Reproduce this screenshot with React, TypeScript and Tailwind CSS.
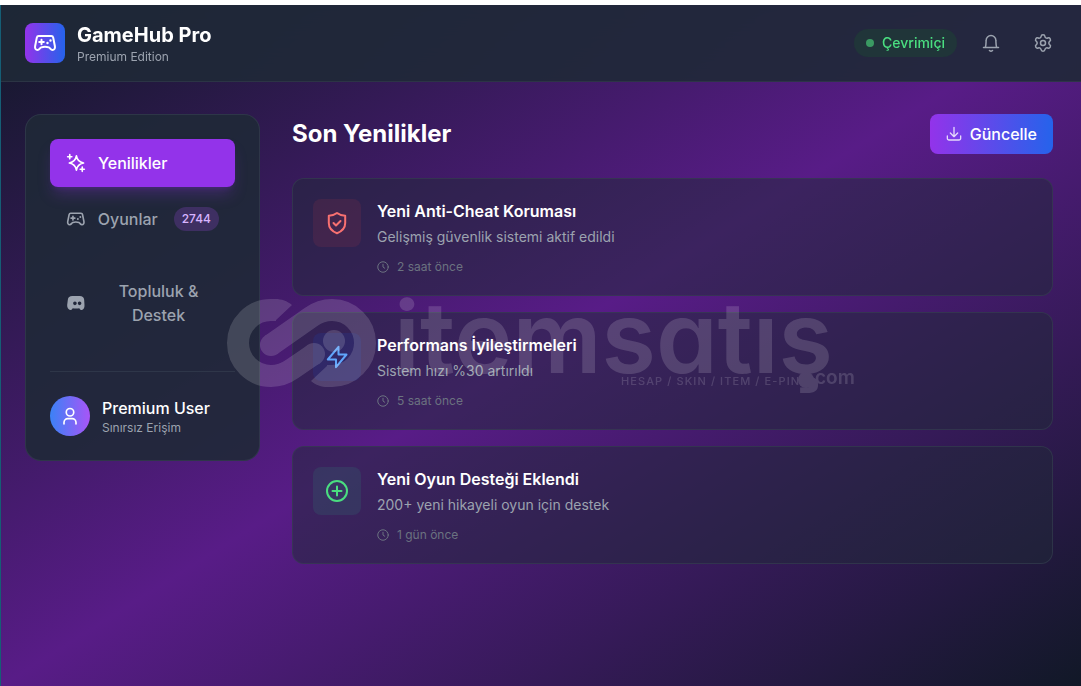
import type { ReactNode } from "react";
import { Settings } from "lucide-react";

type IconProps = { className?: string };

function Stroke({ className, children }: IconProps & { children: ReactNode }) {
  return (
    <svg
      viewBox="0 0 24 24"
      fill="none"
      stroke="currentColor"
      strokeWidth="2"
      strokeLinecap="round"
      strokeLinejoin="round"
      className={className}
      aria-hidden="true"
    >
      {children}
    </svg>
  );
}

const GamepadIcon = ({ className }: IconProps) => (
  <Stroke className={className}>
    <path d="M5.8 5h12.4a2 2 0 0 1 2 1.600l1.700 8.600c.4 2.300-.8 3.800-2.400 3.800-1.900 0-2.200-1.900-3.800-2.600-1.900-.7-5.500-.7-7.400 0C6.700 17.100 6.400 19 4.500 19 2.900 19 1.700 17.500 2.100 15.200L3.800 6.600A2 2 0 0 1 5.800 5Z" />
    <path d="M8.500 8.700v4.600M6.200 11h4.600" />
    <path d="M17.500 9.500h.01M14.500 12h.01" strokeWidth="2.400" />
  </Stroke>
);

const SparklesIcon = ({ className }: IconProps) => (
  <Stroke className={className}>
    <path d="M12.500 3.500c.8 5 3 7.400 8.500 8.500-5.500 1.100-7.700 3.500-8.500 8.500-.8-5-3-7.400-8.500-8.500 5.500-1.100 7.700-3.500 8.500-8.500Z" />
    <path d="M4.500 2v5M2 4.500h5M19.500 17v5M17 19.500h5" />
  </Stroke>
);

const DiscordIcon = ({ className }: IconProps) => (
  <svg viewBox="0 0 24 24" fill="currentColor" fillRule="evenodd" className={className} aria-hidden="true">
    <path d="M7.500 3.500h9c3.200 0 4.900 1.300 5.300 4.500l.4 6.500c.2 3.300-.9 5-3 5.800-1.200.4-2.100-.1-2.700-1.200l-.5-.9c-2.600.6-5.400.6-8 0l-.5.9c-.6 1.100-1.500 1.600-2.700 1.200-2.100-.8-3.600-2.500-3.400-5.800L2.200 8C2.600 4.800 4.300 3.500 7.500 3.500Z M10.700 10.200a2.200 2.200 0 1 0 0 4.400 2.200 2.200 0 0 0 0-4.400Z M16.300 10.200a2.200 2.200 0 1 0 0 4.400 2.200 2.200 0 0 0 0-4.400Z" />
  </svg>
);

const BellIcon = ({ className }: IconProps) => (
  <Stroke className={className}>
    <path d="M2 18h20M4.500 18C5.500 14.500 5.300 12 5.500 8.500a6.500 6.500 0 0 1 13 0c.2 3.500 0 6 1 9.500M10 22c1 .9 3 .9 4 0" />
  </Stroke>
);

const DownloadIcon = ({ className }: IconProps) => (
  <Stroke className={className}>
    <path d="M12 2v13M6.500 10.500 12 16l5.500-5.500M2 15v3.500A2.500 2.500 0 0 0 4.500 21h15a2.500 2.500 0 0 0 2.500-2.500V15" />
  </Stroke>
);

const ShieldIcon = ({ className }: IconProps) => (
  <Stroke className={className}>
    <path d="M12 2c2.300 1.800 5 2.600 8.200 2.800V12c0 5-3 8.200-8.200 10.200C6.800 20.200 3.800 17 3.800 12V4.800C7 4.600 9.700 3.800 12 2Z" />
    <path d="m8.500 12 2.500 2.500 4.500-4.500" />
  </Stroke>
);

const BoltIcon = ({ className }: IconProps) => (
  <Stroke className={className}>
    <path d="M13.500 1.800V9.500H21.500L11 22.200V14.500H2.800Z" />
  </Stroke>
);

const PlusCircleIcon = ({ className }: IconProps) => (
  <Stroke className={className}>
    <circle cx="12" cy="12" r="10" />
    <path d="M12 7.500v9M7.500 12h9" />
  </Stroke>
);

const ClockIcon = ({ className }: IconProps) => (
  <Stroke className={className}>
    <circle cx="12" cy="12" r="10.500" />
    <path d="M12 6.500V12l3.500 2.500" />
  </Stroke>
);

const UserIcon = ({ className }: IconProps) => (
  <Stroke className={className}>
    <circle cx="12" cy="7" r="5" strokeWidth="2.200" />
    <path d="M4 22.500v-2a5 5 0 0 1 5-5h6a5 5 0 0 1 5 5v2" strokeWidth="2.200" />
  </Stroke>
);

const news = [
  {
    title: "Yeni Anti-Cheat Koruması",
    text: "Gelişmiş güvenlik sistemi aktif edildi",
    time: "2 saat önce",
    icon: ShieldIcon,
    tile: "bg-[#ef4444]/10 text-[#f87171]",
  },
  {
    title: "Performans İyileştirmeleri",
    text: "Sistem hızı %30 artırıldı",
    time: "5 saat önce",
    icon: BoltIcon,
    tile: "bg-[#1e40af]/20 text-[#60a5fa]",
  },
  {
    title: "Yeni Oyun Desteği Eklendi",
    text: "200+ yeni hikayeli oyun için destek",
    time: "1 gün önce",
    icon: PlusCircleIcon,
    tile: "bg-[#35506a]/40 text-[#4ade80]",
  },
];

function Watermark() {
  return (
    <div className="pointer-events-none absolute inset-0 flex items-center justify-center pl-0.5">
      <svg viewBox="228 299 627 89" className="w-[627px] overflow-visible fill-white opacity-15" aria-hidden="true">
        <g fill="none" stroke="white" strokeWidth="22">
          <path d="M271 345 311 317C318 312 324 310 332 310A33 33 0 0 1 332 376H327" />
          <path d="M314 354 292 369C285 374 279 376 271 376A33 33 0 0 1 271 310H276" />
        </g>
        <path d="M328 365 311 381C316 385 321 387 328 387ZM275 321 292 305C287 301 282 299 275 299Z" />
        <circle cx="271" cy="345" r="11" />
        <circle cx="314" cy="354" r="11" />
        <circle cx="334" cy="341" r="11" />
        <text x="394" y="373" className="font-['Inter',sans-serif] text-[99px] font-semibold [font-feature-settings:'cv11']">
          itemsatış
        </text>
        <text x="621" y="385" className="font-['Inter',sans-serif] text-[11px] font-medium tracking-widest">
          HESAP / SKIN / ITEM / E-PIN
        </text>
        <circle cx="806" cy="380" r="8" />
        <text x="815" y="384" className="font-['Inter',sans-serif] text-[19px] font-semibold">
          com
        </text>
      </svg>
    </div>
  );
}

export default function App() {
  return (
    <div className="flex min-h-screen flex-col bg-white pt-[5px] font-['Inter',sans-serif]">
      <div className="flex flex-1 flex-col border-l border-[#155e75] bg-linear-to-br/srgb from-[#111827] via-[#581c87] to-[#111827] text-white">
        <header className="flex items-center justify-between border-b border-[#374151]/50 bg-[#1f2937]/90 py-4 pr-5 pl-6 backdrop-blur-xl">
          <div className="flex items-center gap-3">
            <div className="flex size-10 items-center justify-center rounded-lg bg-linear-to-r/srgb from-[#9333ea] to-[#2563eb]">
              <GamepadIcon className="size-6" />
            </div>
            <div>
              <h1 className="text-xl leading-7 font-bold">GameHub Pro</h1>
              <p className="text-xs leading-4 text-[#9ca3af]">Premium Edition</p>
            </div>
          </div>
          <div className="flex items-center gap-4">
            <div className="flex items-center gap-2 rounded-full bg-[#203539] px-3 py-1 text-sm font-medium text-[#4ade80]">
              <span className="size-2 rounded-full bg-[#3a9b62]" />
              Çevrimiçi
            </div>
            <button type="button" aria-label="Bildirimler" className="flex size-9 items-center justify-center rounded-lg text-[#9ca3af]">
              <BellIcon className="size-[18px]" />
            </button>
            <button type="button" aria-label="Ayarlar" className="flex size-9 items-center justify-center rounded-lg text-[#9ca3af]">
              <Settings className="size-5" strokeWidth={1.8} />
            </button>
          </div>
        </header>

        <div className="flex items-start gap-8 py-8 pr-7 pl-6">
          <aside className="w-[235px] shrink-0 rounded-2xl border border-[#374151]/60 bg-[#1f2937]/90 p-6">
            <nav className="flex flex-col gap-2">
              <button type="button" className="flex h-12 items-center gap-3 rounded-lg bg-[#9333ea] px-4 font-medium text-white shadow-lg shadow-[#9333ea]/25">
                <SparklesIcon className="size-5" />
                Yenilikler
              </button>
              <button type="button" className="flex h-12 items-center gap-3 rounded-lg px-4 font-medium text-[#9ca3af]">
                <GamepadIcon className="size-5" />
                Oyunlar
                <span className="ml-1 rounded-full bg-[#3e2f62] px-2 py-1 text-xs text-[#d8b4fe]">2744</span>
              </button>
              <button type="button" className="flex items-center gap-3 rounded-lg px-4 py-7 font-medium text-[#9ca3af]">
                <DiscordIcon className="size-5 shrink-0" />
                <span className="flex-1 text-center">Topluluk &amp; Destek</span>
              </button>
            </nav>
            <div className="mt-4 flex items-center gap-3 border-t border-[#374151]/60 pt-6">
              <div className="flex size-10 items-center justify-center rounded-full bg-linear-to-r/srgb from-[#3b82f6] to-[#a855f7]">
                <UserIcon className="size-[18px]" />
              </div>
              <div>
                <p className="leading-6 font-medium">Premium User</p>
                <p className="text-xs leading-4 text-[#9ca3af]">Sınırsız Erişim</p>
              </div>
            </div>
          </aside>

          <main className="min-w-0 flex-1">
            <div className="mb-6 flex items-center justify-between">
              <h2 className="text-2xl font-bold">Son Yenilikler</h2>
              <button type="button" className="flex h-10 items-center gap-2 rounded-lg bg-linear-to-r/srgb from-[#9333ea] to-[#2563eb] px-4 font-medium">
                <DownloadIcon className="size-4 opacity-80" />
                Güncelle
              </button>
            </div>
            <div className="flex flex-col gap-4">
              {news.map(({ title, text, time, icon: Icon, tile }) => (
                <article key={title} className="flex items-start gap-4 rounded-xl border border-[#374151]/60 bg-[#1f2937]/50 p-5">
                  <div className={`flex size-12 shrink-0 items-center justify-center rounded-lg ${tile}`}>
                    <Icon className="size-6" />
                  </div>
                  <div>
                    <h3 className="leading-6 font-semibold">{title}</h3>
                    <p className="mt-1 text-sm leading-5 text-[#9ca3af]">{text}</p>
                    <p className="mt-3 flex items-center gap-2 text-xs leading-4 text-[#6b7280]">
                      <ClockIcon className="size-3" />
                      {time}
                    </p>
                  </div>
                </article>
              ))}
            </div>
          </main>
        </div>
      </div>
      <Watermark />
    </div>
  );
}
